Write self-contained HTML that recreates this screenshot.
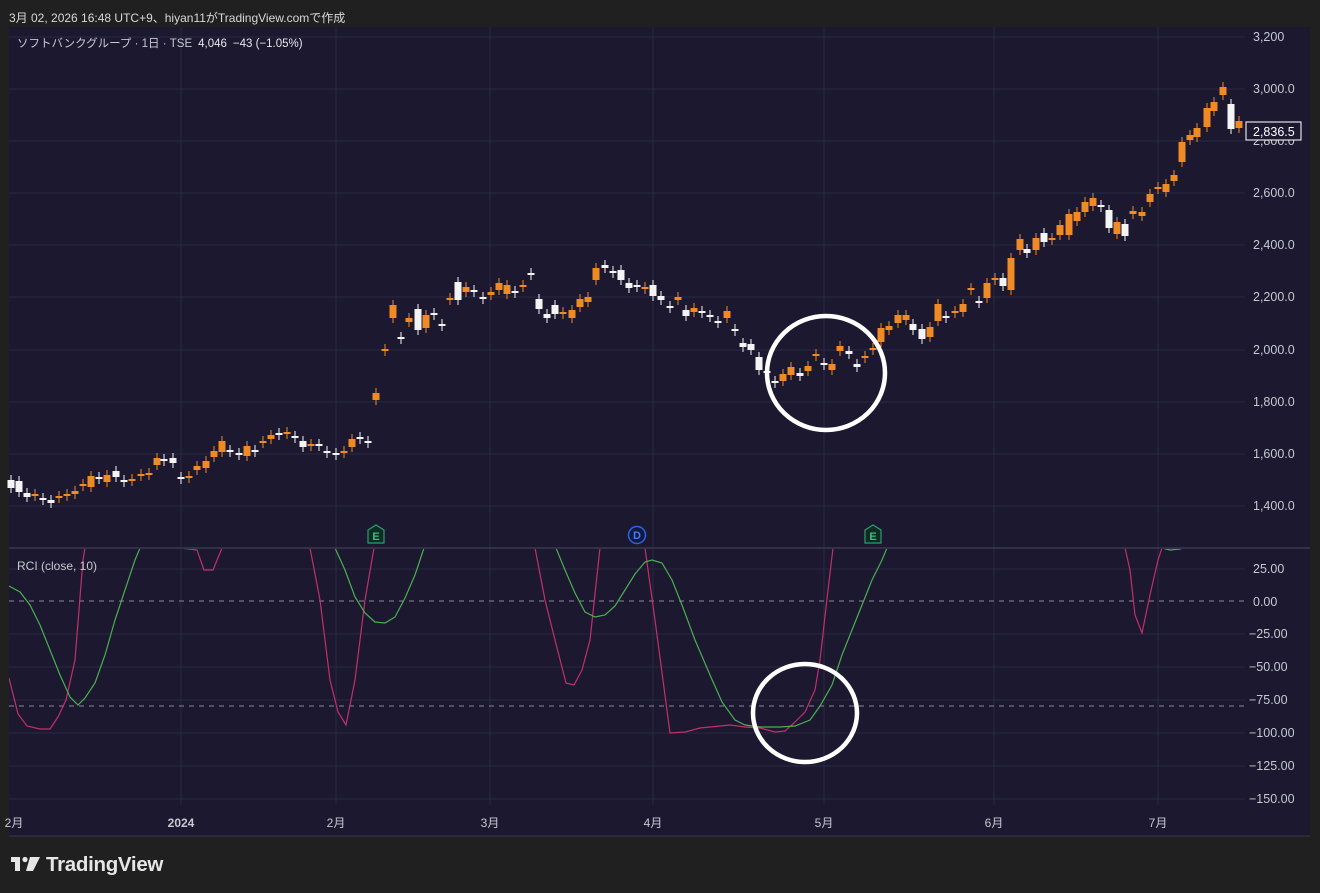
<!DOCTYPE html>
<html><head><meta charset="utf-8"><style>
html,body{margin:0;padding:0;background:#202020;width:1320px;height:893px;overflow:hidden;font-family:"Liberation Sans","Noto Sans CJK JP",sans-serif}
.top{position:absolute;left:9px;top:9px;font-size:12px;color:#d8d8d8}
svg{position:absolute;left:0;top:0}
</style></head><body>
<div class="top">3月 02, 2026 16:48 UTC+9、hiyan11がTradingView.comで作成</div>
<svg id="s" width="1320" height="893" xmlns="http://www.w3.org/2000/svg" font-family="Liberation Sans, Noto Sans CJK JP, sans-serif">
<rect x="9" y="27" width="1301" height="809" fill="#1b1830"/>
<g stroke="#2b2842" stroke-width="1">
<line x1="181" y1="27" x2="181" y2="805"/><line x1="336" y1="27" x2="336" y2="805"/><line x1="490" y1="27" x2="490" y2="805"/><line x1="653" y1="27" x2="653" y2="805"/><line x1="824" y1="27" x2="824" y2="805"/><line x1="994" y1="27" x2="994" y2="805"/><line x1="1158" y1="27" x2="1158" y2="805"/>
<line x1="9" y1="37" x2="1245" y2="37"/><line x1="9" y1="89" x2="1245" y2="89"/><line x1="9" y1="141" x2="1245" y2="141"/><line x1="9" y1="193" x2="1245" y2="193"/><line x1="9" y1="245" x2="1245" y2="245"/><line x1="9" y1="297" x2="1245" y2="297"/><line x1="9" y1="350" x2="1245" y2="350"/><line x1="9" y1="402" x2="1245" y2="402"/><line x1="9" y1="454" x2="1245" y2="454"/><line x1="9" y1="506" x2="1245" y2="506"/>
<line x1="9" y1="569" x2="1245" y2="569"/><line x1="9" y1="634" x2="1245" y2="634"/><line x1="9" y1="667" x2="1245" y2="667"/><line x1="9" y1="700" x2="1245" y2="700"/><line x1="9" y1="733" x2="1245" y2="733"/><line x1="9" y1="766" x2="1245" y2="766"/><line x1="9" y1="799" x2="1245" y2="799"/>
</g>
<line x1="9" y1="548" x2="1310" y2="548" stroke="#3a3750" stroke-width="1.5"/>
<line x1="9" y1="836" x2="1310" y2="836" stroke="#3a3750"/>
<line x1="9" y1="601" x2="1245" y2="601" stroke="#8a8799" stroke-dasharray="5,5"/>
<line x1="9" y1="706" x2="1245" y2="706" stroke="#8a8799" stroke-dasharray="5,5"/>
<g id="c"></g>
<defs><clipPath id="rp"><rect x="9" y="549" width="1236" height="256"/></clipPath></defs>
<g clip-path="url(#rp)" fill="none" stroke-width="1.2">
<polyline stroke="#c2306a" points="9,678 18,714 27,726 40,729 50,729 58,717 66,700 75,660 83,560 88,530 175,530 180,548 197,550 204,570 213,570 222,548 228,530 305,530 310,548 320,600 330,680 338,712 346,725 355,680 365,600 374,548 378,530"/>
<polyline stroke="#c2306a" points="530,530 535,548 545,600 555,640 566,683 574,685 582,670 590,640 600,548 604,530 640,530 645,548 655,620 670,733 685,732 700,728 710,727 730,725 745,727 760,728 775,732 785,731 795,722 805,712 815,690 820,660 828,590 833,548 836,530"/>
<polyline stroke="#c2306a" points="1120,530 1125,548 1130,570 1135,615 1142,633 1150,595 1158,560 1162,548 1166,530"/>
<polyline stroke="#4caf50" points="9,586 20,592 30,605 40,625 50,650 60,675 70,697 78,705 85,698 95,683 105,655 115,620 125,590 135,560 140,548 145,530 330,530 335,548 345,570 355,597 365,613 375,622 385,623 395,617 405,598 415,575 424,548 430,530"/>
<polyline stroke="#4caf50" points="550,530 556,548 565,570 575,593 585,612 595,617 605,615 615,606 625,590 635,574 645,562 652,560 662,563 672,580 682,605 695,640 710,675 722,702 735,720 745,725 760,727 780,727 795,726 810,720 820,706 832,685 842,655 852,630 862,605 872,580 882,560 887,548 892,530"/>
<polyline stroke="#4caf50" points="1158,540 1162,548 1170,550 1180,549 1190,545"/>
</g>
<ellipse cx="826" cy="373" rx="59" ry="57" fill="none" stroke="#fff" stroke-width="4.5"/>
<ellipse cx="805" cy="713" rx="52" ry="49" fill="none" stroke="#fff" stroke-width="4.5"/>
<g font-size="11" font-weight="bold" text-anchor="middle">
<path d="M368,530 L376,525 L384,530 L384,543 L368,543 Z" fill="#0f2b24" stroke="#2c9c70" stroke-width="1.2"/><text x="376" y="540" fill="#3dbb85">E</text>
<path d="M865,530 L873,525 L881,530 L881,543 L865,543 Z" fill="#0f2b24" stroke="#2c9c70" stroke-width="1.2"/><text x="873" y="540" fill="#3dbb85">E</text>
<circle cx="637" cy="535" r="8.5" fill="#101a40" stroke="#2f62e0" stroke-width="1.5"/><text x="637" y="539" fill="#4a7cf0">D</text>
</g>
<g font-size="12.5" fill="#c8c8d0">
<text x="1253" y="41">3,200</text><text x="1253" y="93">3,000.0</text><text x="1253" y="145">2,800.0</text><text x="1253" y="197">2,600.0</text><text x="1253" y="249">2,400.0</text><text x="1253" y="301">2,200.0</text><text x="1253" y="354">2,000.0</text><text x="1253" y="406">1,800.0</text><text x="1253" y="458">1,600.0</text><text x="1253" y="510">1,400.0</text>
<text x="1253" y="573">25.00</text><text x="1253" y="606">0.00</text><text x="1249" y="638">−25.00</text><text x="1249" y="671">−50.00</text><text x="1249" y="704">−75.00</text><text x="1249" y="737">−100.00</text><text x="1249" y="770">−125.00</text><text x="1249" y="803">−150.00</text>
</g>
<rect x="1246" y="122" width="55" height="18" fill="#1b1830" stroke="#e0e0e0" stroke-width="1.2"/>
<text x="1253" y="136" font-size="12.5" fill="#fff">2,836.5</text>
<g font-size="12" fill="#c8c8d0" text-anchor="middle">
<text x="14" y="827">2月</text><text x="181" y="827" font-weight="bold">2024</text><text x="336" y="827">2月</text><text x="490" y="827">3月</text><text x="653" y="827">4月</text><text x="824" y="827">5月</text><text x="994" y="827">6月</text><text x="1158" y="827">7月</text>
</g>
<text x="17" y="47" font-size="11.5" fill="#c8c8d0">ソフトバンクグループ · 1日 · TSE<tspan fill="#e8e8e8" dx="6">4,046</tspan><tspan dx="6" fill="#e8e8e8">−43 (−1.05%)</tspan></text>
<text x="17" y="570" font-size="12" fill="#c8c8d0">RCI (close, 10)</text>
<g fill="#e6e6e6"><rect x="11" y="857" width="9" height="5"/><rect x="15" y="857" width="5" height="14"/><circle cx="25" cy="859.5" r="2.6"/><path d="M30,857 L40,857 L33,871 L26,871 Z"/></g>
<text x="46" y="871" font-size="20.5" font-weight="bold" fill="#e6e6e6" letter-spacing="-0.3">TradingView</text>
</svg>
<script>
var d=[[11,"w",480,488],[19,"w",481,492],[27,"w",493,497],[35,"o",494,495],[43,"w",498,500],[51,"w",500,503],[59,"o",496,497],[67,"o",494,496],[75,"o",491,494],[83,"o",484,486],[91,"o",476,487],[99,"w",477,479],[107,"o",475,482],[116,"w",471,477],[124,"w",480,482],[132,"o",479,481],[141,"o",474,476],[149,"o",473,475],[157,"o",458,465],[164,"w",459,461],[173,"w",458,463],
[181,"w",477,479],[189,"o",476,478],[197,"o",466,470],[206,"o",461,468],[214,"o",451,457],[222,"o",441,452],[230,"w",450,452],[239,"w",453,455],[247,"o",446,456],[255,"w",450,452],[263,"o",441,443],[271,"o",435,439],[279,"w",433,435],[287,"o",432,434],[295,"w",436,438],[303,"w",441,447],[311,"o",444,446],[319,"w",444,446],[327,"w",451,453],[336,"w",453,455],[344,"o",451,453],[352,"o",439,447],[360,"w",437,439],[368,"w",441,443],[376,"o",393,400],
[385,"o",349,351],[393,"o",305,318],[401,"w",337,339],[409,"o",318,322],[418,"w",309,330],[426,"o",315,328],[434,"w",313,315],[442,"w",324,326],[450,"o",298,300],[458,"w",282,300],[466,"o",287,292],[474,"w",290,292],[483,"w",297,299],[491,"o",292,295],[499,"o",283,290],[507,"o",285,294],[515,"w",291,293],[523,"o",285,287],[531,"w",273,275],[539,"w",299,309],[547,"w",314,318],[555,"w",305,314],[563,"o",312,314],[572,"o",310,318],[580,"o",299,307],[588,"o",297,302],[596,"o",268,280],[605,"w",265,268],[613,"w",271,273],[621,"w",270,280],[629,"w",283,288],[637,"w",285,287],[645,"o",287,289],[653,"w",285,296],[661,"w",296,300],[670,"w",306,308],[678,"o",297,300],[686,"w",310,316],[694,"o",308,312],[702,"w",311,313],[710,"w",315,317],[718,"w",321,323],[727,"o",311,318],[735,"w",329,331],[743,"w",343,347],[751,"w",344,350],[759,"w",357,370],
[767,"w",371,373],[775,"w",381,383],[783,"o",374,381],[791,"o",367,375],[800,"w",373,376],[808,"o",366,371],[816,"o",354,356],[824,"w",363,365],[832,"o",364,370],[840,"o",346,351],[849,"w",351,354],[857,"w",364,367],[865,"o",356,358],[873,"o",348,350],[881,"o",328,342],[889,"o",326,330],[898,"o",315,323],[906,"o",315,320],[913,"w",324,330],[922,"w",329,339],[930,"o",327,337],[938,"o",304,321],[946,"w",316,318],[955,"o",311,313],[963,"o",304,312],[971,"o",288,290],[979,"w",301,303],[987,"o",283,298],[995,"o",278,280],[1003,"w",278,286],[1011,"o",258,290],[1020,"o",239,250],[1027,"w",249,253],[1036,"o",238,250],[1044,"w",233,242],[1052,"o",238,240],[1060,"o",225,235],[1069,"o",214,235],[1077,"o",212,221],[1085,"o",202,212],[1093,"o",198,206],[1101,"w",205,207],[1109,"w",210,228],[1117,"o",222,234],[1125,"w",224,236],[1133,"o",211,214],[1142,"o",212,216],[1150,"o",194,202],[1158,"o",187,189],[1166,"o",184,192],[1174,"o",175,181],[1182,"o",142,162],[1190,"o",135,140],[1197,"o",128,137],[1207,"o",108,127],[1214,"o",102,111],[1223,"o",87,95],[1231,"w",104,129],[1239,"o",121,128]];
var g=document.getElementById("c"),h="";
d.forEach(function(c){var col=c[1]=="o"?"#f08a24":"#f4f4f4";var t=c[2],b=c[3];if(b-t<2)b=t+2;
h+='<line x1="'+c[0]+'" x2="'+c[0]+'" y1="'+(t-5)+'" y2="'+(b+5)+'" stroke="'+col+'" stroke-width="1"/>';
h+='<rect x="'+(c[0]-3.5)+'" y="'+t+'" width="7" height="'+(b-t)+'" fill="'+col+'"/>';});
g.innerHTML=h;
</script>
</body></html>
